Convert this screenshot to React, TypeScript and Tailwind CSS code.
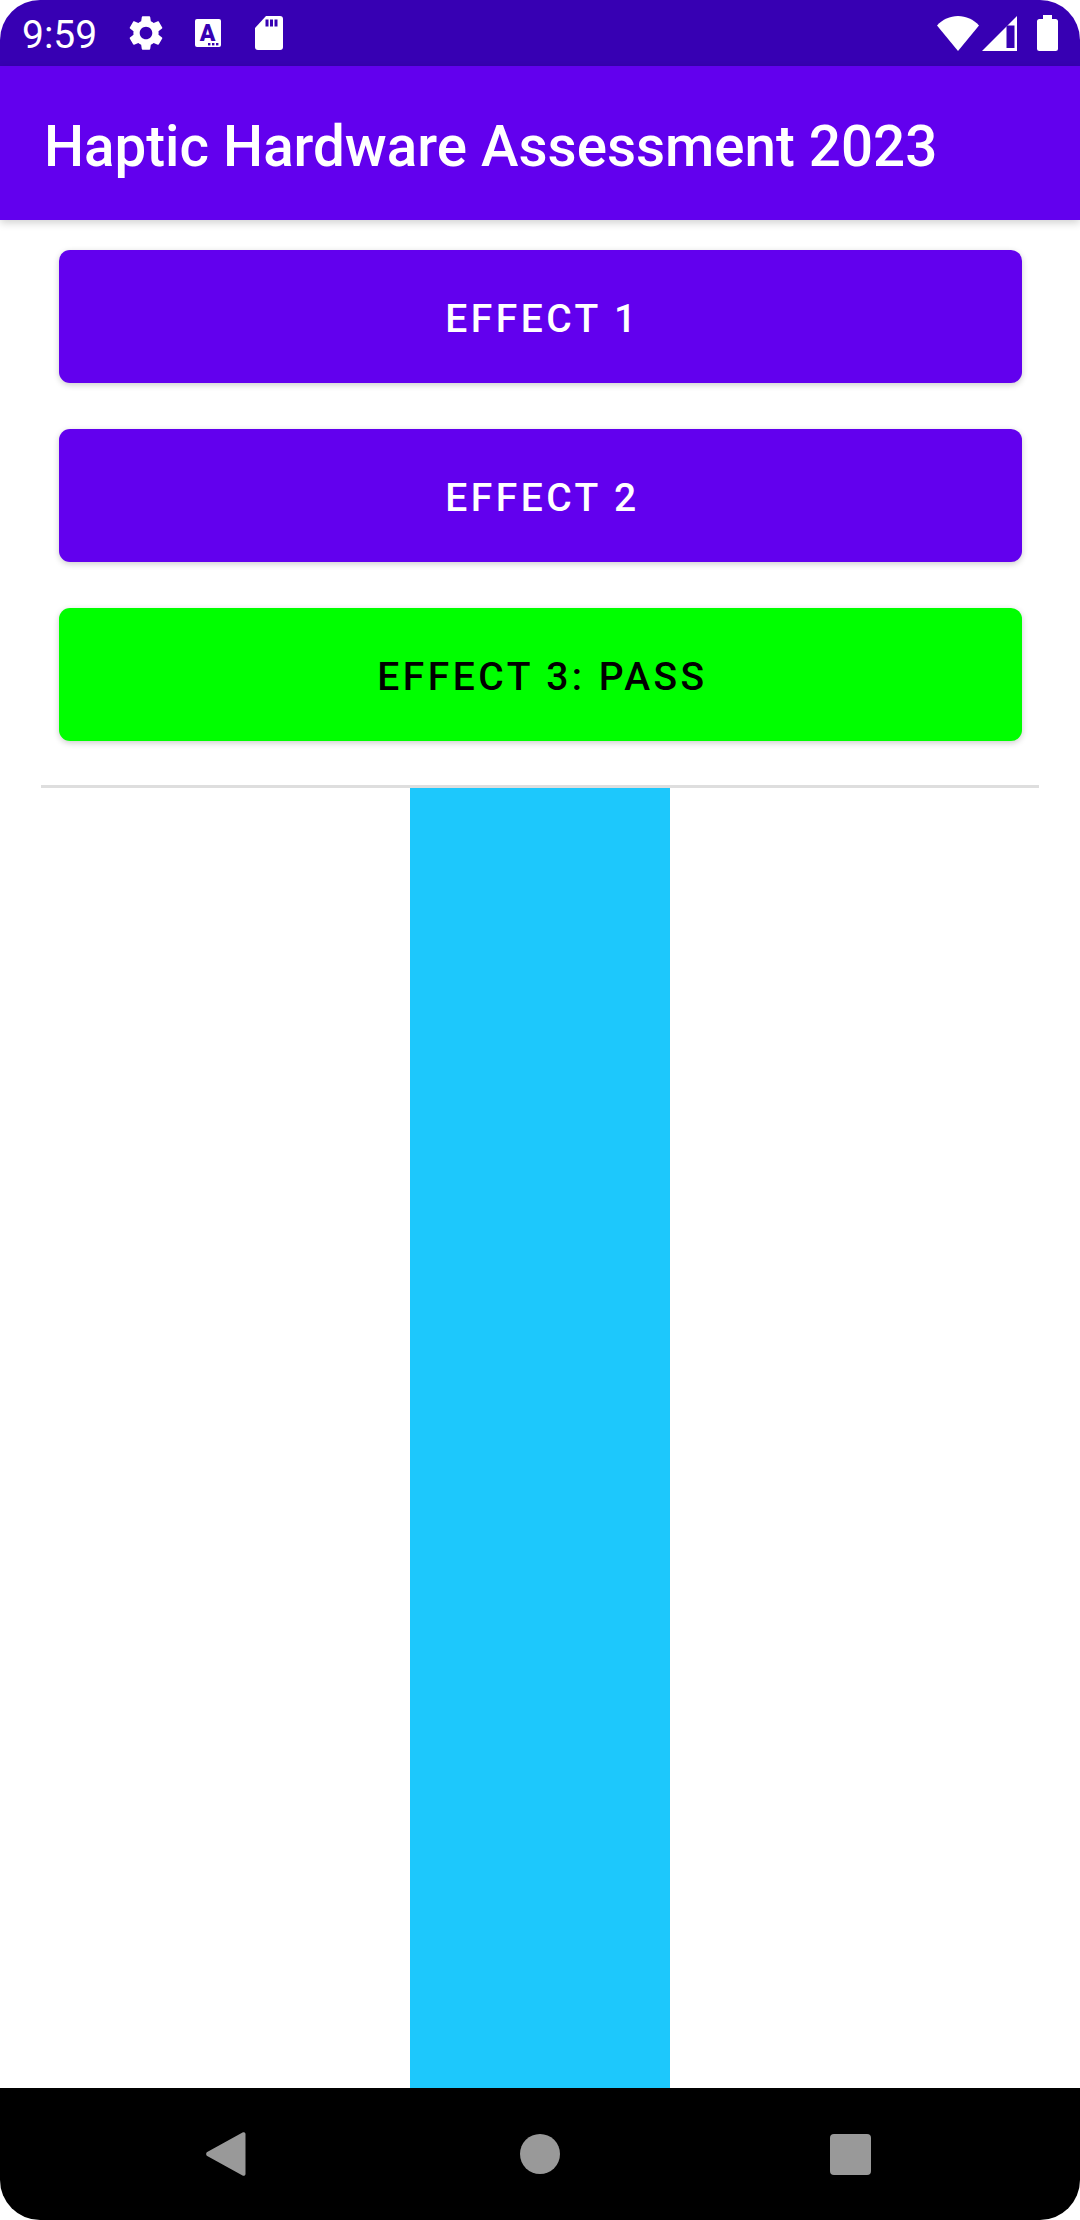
const ROBOTO = "font-['Roboto',sans-serif]";

function StatusIcons() {
  return (
    <div className="flex items-center">
      {/* settings */}
      <svg width="42" height="42" viewBox="0 0 24 24" fill="#fff" className="ml-[28px]">
        <path d="M19.14 12.94c.04-.3.06-.61.06-.94 0-.32-.02-.64-.07-.94l2.03-1.58c.18-.14.23-.41.12-.61l-1.92-3.32c-.12-.22-.37-.29-.59-.22l-2.39.96c-.5-.38-1.03-.7-1.62-.94l-.36-2.54c-.04-.24-.24-.41-.48-.41h-3.84c-.24 0-.43.17-.47.41l-.36 2.54c-.59.24-1.13.57-1.62.94l-2.39-.96c-.22-.08-.47 0-.59.22L2.74 8.87c-.12.21-.08.47.12.61l2.03 1.58c-.05.3-.09.63-.09.94s.02.64.07.94l-2.03 1.58c-.18.14-.23.41-.12.61l1.92 3.32c.12.22.37.29.59.22l2.39-.96c.5.38 1.03.7 1.62.94l.36 2.54c.05.24.24.41.48.41h3.84c.24 0 .44-.17.47-.41l.36-2.54c.59-.24 1.13-.56 1.62-.94l2.39.96c.22.08.47 0 .59-.22l1.92-3.32c.12-.22.07-.47-.12-.61l-2.01-1.58zM12 15.6c-1.98 0-3.6-1.62-3.6-3.6s1.62-3.6 3.6-3.6 3.6 1.62 3.6 3.6-1.62 3.6-3.6 3.6z" />
      </svg>
      {/* accessibility text badge */}
      <svg width="26" height="28" viewBox="0 0 26 28" className="ml-[28px]">
        <rect x="0" y="0" width="26" height="28" rx="2" fill="#fff" />
        <text x="12.500" y="22" textAnchor="middle" fontFamily="Roboto, sans-serif" fontWeight="900" fontSize="23" fill="#3700B3">
          A
        </text>
        <rect x="13" y="24" width="2.400" height="2.400" fill="#3700B3" />
        <rect x="17" y="24" width="2.400" height="2.400" fill="#3700B3" />
        <rect x="21" y="24" width="2.400" height="2.400" fill="#3700B3" />
      </svg>
      {/* sd card */}
      <svg width="28" height="34" viewBox="0 0 28 34" className="ml-[34px]">
        <path d="M11 0H25a3 3 0 0 1 3 3V31a3 3 0 0 1-3 3H3a3 3 0 0 1-3-3V12z" fill="#fff" />
        <rect x="10.500" y="3.500" width="3" height="7" fill="#3700B3" />
        <rect x="15" y="3.500" width="3" height="7" fill="#3700B3" />
        <rect x="19.500" y="3.500" width="3" height="7" fill="#3700B3" />
      </svg>
    </div>
  );
}

function SystemIcons() {
  return (
    <div className="flex items-center">
      {/* wifi */}
      <svg width="42" height="35" viewBox="0 0 42 35">
        <path d="M0 9.500C5.500 3.500 13 0 21 0s15.500 3.500 21 9.500L21 35z" fill="#fff" />
      </svg>
      {/* signal */}
      <svg width="35" height="35" viewBox="0 0 35 35" className="ml-[3px]">
        <path d="M35 0V35H0z" fill="#fff" />
        <path d="M24.500 9.500H32.500V32H24.500z" fill="#3700B3" />
      </svg>
      {/* battery */}
      <svg width="21" height="36" viewBox="0 0 21 36" className="ml-[20px]">
        <path
          d="M6 0H15V4H18.500A2.500 2.500 0 0 1 21 6.500V33.500A2.500 2.500 0 0 1 18.500 36H2.500A2.500 2.500 0 0 1 0 33.500V6.500A2.500 2.500 0 0 1 2.500 4H6z"
          fill="#fff"
        />
      </svg>
    </div>
  );
}

function EffectButton({ label, pass }: { label: string; pass?: boolean }) {
  return (
    <button
      className={`h-[133px] w-full rounded-[11px] pl-[4px] pt-[5px] text-[39px] font-medium tracking-[0.0892em] shadow-[0_2px_6px_rgba(0,0,0,0.2)] ${
        pass ? "bg-[#00ff00] text-black" : "bg-[#6200ee] text-white"
      }`}
    >
      {label}
    </button>
  );
}

export default function App() {
  return (
    <div className={`flex h-[2220px] w-[1080px] flex-col overflow-hidden rounded-[40px] bg-white ${ROBOTO}`}>
      <div className="flex h-[66px] shrink-0 items-center justify-between bg-[#3700b3] pl-[22px] pr-[22px]">
        <div className="flex items-center">
          <span className="mt-[4px] text-[39px] leading-none text-white">9:59</span>
          <StatusIcons />
        </div>
        <SystemIcons />
      </div>

      <header className="relative z-10 flex h-[154px] shrink-0 items-center bg-[#6200ee] pl-[44px] pt-[8px] shadow-[0_3px_8px_rgba(0,0,0,0.18)]">
        <h1 className="text-[56.5px] font-medium leading-none text-white">Haptic Hardware Assessment 2023</h1>
      </header>

      <div className="flex shrink-0 flex-col gap-[46px] pl-[59px] pr-[58px] pt-[30px] pb-[44px]">
        <EffectButton label="EFFECT 1" />
        <EffectButton label="EFFECT 2" />
        <EffectButton label="EFFECT 3: PASS" pass />
      </div>

      <div className="mx-[41px] h-[3px] shrink-0 bg-[#dedede]" />

      <div className="flex flex-1 justify-center">
        <div className="w-[260px] bg-[#1dc8fc]" />
      </div>

      <nav className="flex h-[132px] shrink-0 items-center bg-black">
        <svg width="40" height="46" viewBox="0 0 40 46" className="ml-[206px]">
          <path
            d="M37 1.200 1.200 21a2.400 2.400 0 0 0 0 4L37 44.800a2 2 0 0 0 2.500-2V3.200a2 2 0 0 0-2.500-2z"
            fill="#999"
          />
        </svg>
        <div className="ml-[274px] h-[40px] w-[40px] rounded-full bg-[#999]" />
        <div className="ml-[270px] h-[41px] w-[41px] rounded-[4px] bg-[#999]" />
      </nav>
    </div>
  );
}
